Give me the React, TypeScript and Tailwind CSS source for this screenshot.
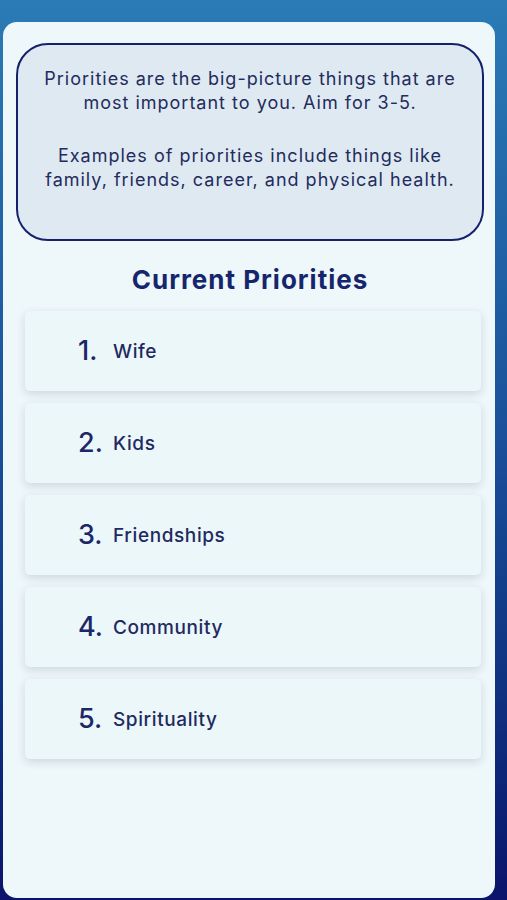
const priorities = ["Wife", "Kids", "Friendships", "Community", "Spirituality"]

export default function App() {
    return (
        <div
            className="h-[900px] w-full overflow-hidden bg-gradient-to-b from-[#2a7bb6] via-[#1a4f98] to-[#0b146a] pt-[22px] pl-[3px] pr-[12px]"
            style={{ fontFamily: "Inter, 'Noto Sans', sans-serif" }}
        >
            <div className="flex h-[876px] flex-col rounded-[14px] bg-[#eef7fa] pl-[13px] pr-[11px] pt-[21px]">
                <div className="flex h-[198px] flex-col items-center rounded-[32px] border-2 border-[#15216a] bg-[#dfe9f2] px-2 pt-[22px] text-center text-[18px] leading-[24px] tracking-[1px] text-[#232c5c]">
                    <p>
                        Priorities are the big-picture things that are
                        <br />
                        most important to you. Aim for 3-5.
                    </p>
                    <p className="mt-[29px]">
                        Examples of priorities include things like
                        <br />
                        family, friends, career, and physical health.
                    </p>
                </div>

                <h1 className="mt-[22px] text-center text-[26px] font-bold leading-[34px] tracking-[1px] text-[#16266c]">
                    Current Priorities
                </h1>

                <div className="mt-[14px] flex flex-col gap-[12px] pl-[9px] pr-[3px]">
                    {priorities.map((p, i) => (
                        <div
                            key={p}
                            className="flex h-[80px] items-center rounded-[5px] bg-[#ecf7fa] pl-[53px] shadow-[0_3px_8px_rgba(30,60,90,0.16)]"
                        >
                            <span className="w-[35px] text-[27px] font-medium text-[#1c2866]">
                                {i + 1}.
                            </span>
                            <span className="pt-[2px] text-[19px] font-medium tracking-[0.6px] text-[#1f2a60]">
                                {p}
                            </span>
                        </div>
                    ))}
                </div>
            </div>
        </div>
    )
}
